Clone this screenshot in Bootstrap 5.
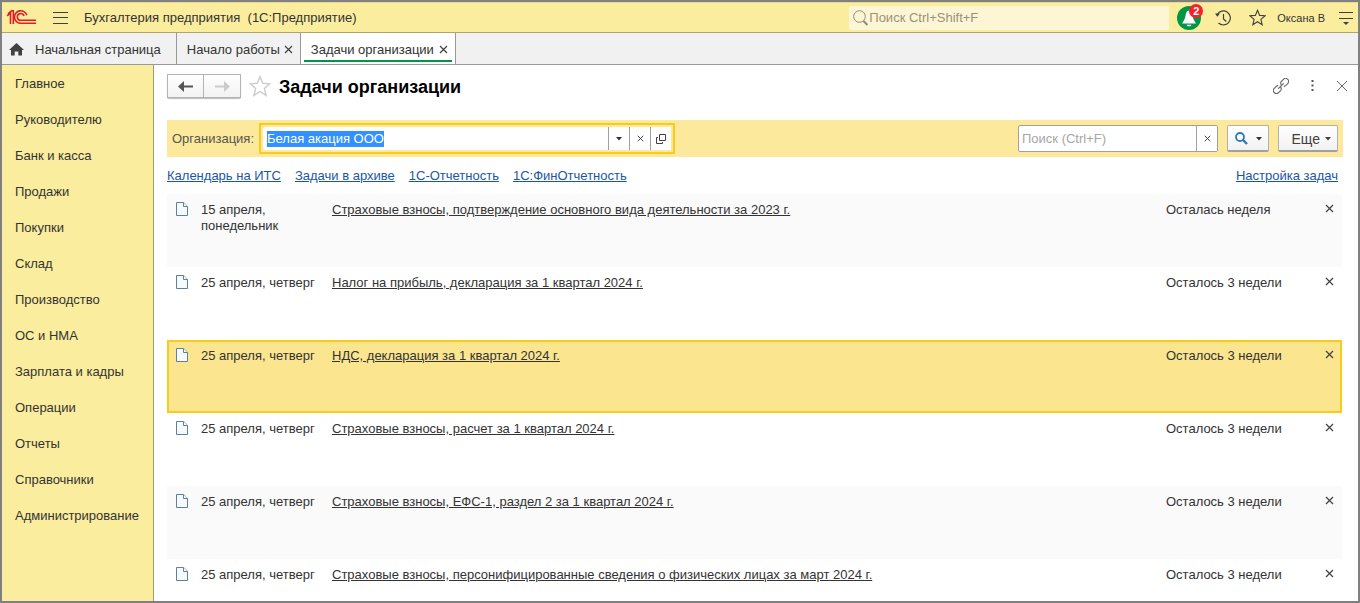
<!DOCTYPE html>
<html lang="ru">
<head>
<meta charset="utf-8">
<meta name="viewport" content="width=device-width, initial-scale=1">
<title>Задачи организации</title>
<link href="https://cdn.jsdelivr.net/npm/bootstrap@5.3.0/dist/css/bootstrap.min.css" rel="stylesheet">
<style>
  body { font-family: "Liberation Sans", Arial, sans-serif; font-size: 13px; line-height: 16px; color: #333; }
  button, input { font: inherit; color: inherit; }
  svg { display: block; flex: none; }
  .app { border: 2px solid #808080; }
  .bare { border: 0; background: none; padding: 0; color: #404040; }
  .topbar { height: 31px; background: #fbed9e; border-top: 1px solid #e9d98a; border-bottom: 1px solid #b0a468; }
  .product { padding-left: 16px; white-space: pre; }
  .top-tools { gap: 11px; padding: 0 5px 0 8px; }
  .history { padding: 0 3px; }
  .global-find { width: 320px; height: 24px; background: #fdf6d4; border-radius: 2px; color: #8f8a74; }
  .plain-input { border: 0; outline: 0; background: transparent; min-width: 0; padding: 0; }
  .plain-input::placeholder { color: #a6a6a6; opacity: 1; }
  .global-find .plain-input::placeholder { color: #98927a; }
  .user { padding-right: 3px; font-size: 11px; color: #333; text-decoration: none; }
  .count { left: 12px; top: -2px; width: 14px; height: 14px; border-radius: 50%; background: #f5222d; color: #fff; font-size: 11px; line-height: 14px; font-weight: bold; }
  .tabs { height: 32px; background: #f1f1f1; border-bottom: 1px solid #999; }
  .tab { border-right: 1px solid #999; padding: 2px 7px 0 10px; gap: 4px; }
  .tab a { color: #333; text-decoration: none; }
  .tab.home { padding: 2px 15px 0 7px; gap: 11px; }
  .tab.current { gap: 5px; background: #fff; box-shadow: inset 3px 0 #fff, inset -3px 0 #fff, inset 0 -2px #fff, inset 0 -4px #009646; }
  .side { width: 152px; padding-top: 1px; background: #fbed9e; border-right: 1px solid #a89c62; }
  .side a { color: #333; text-decoration: none; padding: 10px 0 10px 13px; }
  .main-area { padding: 9px 15px 0 13px; background: #fff; }
  .title-tools { gap: 22px; padding-right: 1px; margin-right: -6px; }
  .nav-pair { box-shadow: 0 1px 1px #bbb; border-radius: 2px; }
  .nav-pair button { width: 37px; height: 24px; border: 1px solid #b4b4b4; background: linear-gradient(#fff, #f2f2f2); padding: 0; color: #555; }
  .nav-pair button + button { border-left: 0; color: #ccc; }
  .fav { color: #ccc; }
  h1 { font-size: 18px; line-height: 22px; padding-top: 2px; font-weight: bold; color: #000; margin: 0; }
  .filterbar { height: 37px; margin-top: 22px; padding: 0 5px; background: #fce99c; }
  .filterbar > label { color: #555; }
  .org { width: 416px; height: 31px; margin-left: 5px; border: 2px solid #fbcb1c; padding: 2px; }
  .org .plain-input { background: #fff; padding-left: 4px; border-radius: 2px 0 0 2px; }
  .org button { width: 21px; border: 0; border-left: 1px solid #a0a0a0; background: #fff; padding: 0; }
  .org .plain-input::selection { background: #3390ff; color: #fff; }
  .right-tools { gap: 9px; }
  .find { width: 200px; height: 27px; border: 1px solid #a0a0a0; border-radius: 2px; background: #fff; }
  .find .plain-input { padding-left: 3px; }
  .find button { width: 21px; border: 0; border-left: 1px solid #a0a0a0; background: #fff; padding: 0; }
  .push { height: 27px; border: 1px solid #b0b0b0; border-bottom: 2px solid #a0a0a0; border-radius: 2px; background: linear-gradient(#fff, #f2f2f2); padding: 1px 6px 0; }
  .push.more { width: 60px; gap: 5px; font-size: 14px; color: #404040; }
  .push.lens { width: 42px; }
  .links { padding: 11px 5px 0 0; gap: 14px; }
  .links a { color: #1a56a8; }
  .tasks { table-layout: fixed; margin-top: 10px; width: calc(100% - 1px); border-collapse: collapse; }
  .tasks td { height: 73px; padding: 8px 0 0; vertical-align: top; }
  .tasks td:first-child { padding-left: 9px; }
  .tasks td:last-child { padding: 7px 0 0 13px; }
  .tasks tr:nth-child(odd) td { background: #fafafa; }
  .tasks tr.chosen { outline: 2px solid #fbcb1c; outline-offset: -2px; }
  .tasks tr.chosen td { background: #fbe58f; }
  .tasks a { color: #333; }
  .c-icon { width: 34px; } .c-date { width: 131px; } .c-left { width: 146px; } .c-del { width: 30px; }
</style>
</head>
<body>
<svg class="d-none" aria-hidden="true">
  <symbol id="x" viewBox="0 0 9 9"><path d="M1 1l7 7M8 1l-7 7" stroke="currentColor" stroke-width="1.2" fill="none"/></symbol>
  <symbol id="down" viewBox="0 0 6 4"><path d="M0 0h6L3 3.5z" fill="currentColor"/></symbol>
  <symbol id="star" viewBox="0 0 20 20"><path d="M10 1.5l2.500 6 6.300.5-4.800 4.200 1.500 6.300L10 15l-5.500 3.500L6 12.200 1.200 8l6.300-.5z" stroke="currentColor" stroke-width="1.3" fill="none"/></symbol>
  <symbol id="doc" viewBox="0 0 12 14"><path d="M.5.5h7.2l3.8 3.8v9.2H.5z" fill="#f7fafc" stroke="#5f8098"/><path d="M7.5.5v4h4" fill="#fff" stroke="#5f8098"/></symbol>
</svg>
<div class="app vh-100 d-flex flex-column overflow-hidden">
  <header class="topbar d-flex align-items-center flex-shrink-0">
    <svg class="ms-1" width="31" height="17" viewBox="0 0 31 17" fill="none" stroke="#dc1f26" stroke-width="1.6" role="img" aria-label="1С"><path d="M1.200 6.800L4.500 3.800V15M2 4.800L5.500 1.800H7.300V15"/><path d="M20.800 6.200A6.300 6.300 0 1 0 15.200 14.300H30"/><path d="M18 7A3.400 3.400 0 1 0 15.200 11.300H30"/></svg>
    <button class="bare ms-3" aria-label="Меню"><svg width="15" height="12" viewBox="0 0 15 12" stroke="#404040"><path d="M0 .5h15M0 5.500h15M0 11.500h15"/></svg></button>
    <span class="product flex-grow-1">Бухгалтерия предприятия  (1С:Предприятие)</span>
    <div class="global-find d-flex align-items-center px-1">
      <svg width="16" height="16" viewBox="0 0 16 16" fill="none" stroke="currentColor"><circle cx="6.500" cy="6.500" r="5.800"/><path d="M10.500 11l4 4" stroke-width="2"/></svg>
      <input class="plain-input flex-grow-1" type="search" aria-label="Поиск" placeholder="Поиск Ctrl+Shift+F">
    </div>
    <div class="top-tools d-flex align-items-center">
      <button class="bare position-relative" aria-label="Уведомления"><svg width="24" height="24" viewBox="0 0 24 24"><circle cx="12" cy="12" r="12" fill="#009646"/><path d="M12 4.500c-2.600 0-3 3-3.500 5.500-.5 3-2 5-3.500 7.500h14c-1.500-2.500-3-4.500-3.500-7.500-.5-2.500-.9-5.500-3.500-5.500zM9.500 18.700h5l-1.200 1.500h-2.600z" fill="#fff"/></svg><span class="count position-absolute text-center">2</span></button>
      <button class="bare history" aria-label="История"><svg width="16" height="16" viewBox="0 0 16 16" fill="none" stroke="#404040" stroke-width="1.200"><path d="M2.300 4.500A7 7 0 1 1 3.500 13M8.500 4v5l2.800 2.500"/><path d="M0 3.500h5L2.300 6.800z" fill="#404040" stroke="none"/></svg></button>
      <button class="bare ms-1" aria-label="Избранное"><svg width="17" height="17"><use href="#star"/></svg></button>
      <a class="user" href="#">Оксана В</a>
      <button class="bare" aria-label="Сервис"><svg width="14" height="14" viewBox="0 0 14 14"><path d="M0 1.500h14M0 7.500h14" stroke="#404040"/><path d="M4 11h6l-3 3z" fill="#404040"/></svg></button>
    </div>
  </header>
  <nav class="tabs d-flex flex-shrink-0">
    <div class="tab home d-flex align-items-center"><svg width="15" height="13" viewBox="0 0 15 13"><path d="M7.500 0L15 7h-2v5.500H9.300V8.500H5.700v4H2V7H0z" fill="#404040"/></svg><a href="#">Начальная страница</a></div>
    <div class="tab d-flex align-items-center"><a href="#">Начало работы</a><button class="bare" aria-label="Закрыть"><svg width="9" height="9"><use href="#x"/></svg></button></div>
    <div class="tab current d-flex align-items-center"><a href="#">Задачи организации</a><button class="bare" aria-label="Закрыть"><svg width="9" height="9"><use href="#x"/></svg></button></div>
  </nav>
  <div class="d-flex flex-grow-1 overflow-hidden">
    <nav class="side d-flex flex-column flex-shrink-0">
      <a href="#">Главное</a><a href="#">Руководителю</a><a href="#">Банк и касса</a><a href="#">Продажи</a><a href="#">Покупки</a><a href="#">Склад</a><a href="#">Производство</a><a href="#">ОС и НМА</a><a href="#">Зарплата и кадры</a><a href="#">Операции</a><a href="#">Отчеты</a><a href="#">Справочники</a><a href="#">Администрирование</a>
    </nav>
    <main class="main-area flex-grow-1">
      <div class="d-flex align-items-center">
        <div class="nav-pair d-flex">
          <button class="d-flex align-items-center justify-content-center" aria-label="Назад"><svg width="15" height="11" viewBox="0 0 15 11"><path d="M0 5.500L6 0v4.500h9v2H6V11z" fill="currentColor"/></svg></button>
          <button class="d-flex align-items-center justify-content-center" aria-label="Вперед"><svg width="15" height="11" viewBox="0 0 15 11"><path d="M15 5.500L9 0v4.500H0v2h9V11z" fill="currentColor"/></svg></button>
        </div>
        <button class="bare fav mx-2" aria-label="В избранное"><svg width="22" height="22"><use href="#star"/></svg></button>
        <h1 class="flex-grow-1">Задачи организации</h1>
        <div class="title-tools d-flex align-items-center">
          <button class="bare" aria-label="Ссылка"><svg width="16" height="16" viewBox="0 0 16 16" fill="none" stroke="#666" stroke-width="1.100" stroke-linecap="round"><g transform="rotate(-45 8 8)"><path d="M7 8.500A3 3 0 0 1 4.500 11H1.500a3 3 0 0 1 0-6h3A3 3 0 0 1 6 5.500M9 7.500A3 3 0 0 1 11.500 5h3a3 3 0 0 1 0 6h-3a3 3 0 0 1-1.500-.5M4.500 8h7"/></g></svg></button>
          <button class="bare" aria-label="Еще"><svg width="3" height="12" viewBox="0 0 3 12" fill="#555"><path d="M.5 0h2v2h-2zM.5 4.500h2v2h-2zM.5 9h2v2h-2z"/></svg></button>
          <button class="bare" aria-label="Закрыть"><svg width="12" height="12" viewBox="0 0 12 12" stroke="#666"><path d="M1 1l10 10M11 1L1 11"/></svg></button>
        </div>
      </div>
      <div class="filterbar d-flex align-items-center">
        <label for="org">Организация:</label>
        <div class="org d-flex me-auto">
          <input id="org" class="plain-input flex-grow-1" type="text" value="Белая акация ООО">
          <button class="d-flex align-items-center justify-content-center" aria-label="Выбрать"><svg width="6" height="4"><use href="#down"/></svg></button>
          <button class="d-flex align-items-center justify-content-center" aria-label="Очистить"><svg width="7" height="7"><use href="#x"/></svg></button>
          <button class="d-flex align-items-center justify-content-center" aria-label="Открыть"><svg width="10" height="10" viewBox="0 0 10 10" fill="none" stroke="#404040"><path d="M3.500.5h6v6h-6zM2 3.500H.5v6h6V8"/></svg></button>
        </div>
        <div class="right-tools d-flex">
          <div class="find d-flex">
            <input class="plain-input flex-grow-1" type="search" aria-label="Поиск по списку" placeholder="Поиск (Ctrl+F)">
            <button class="d-flex align-items-center justify-content-center" aria-label="Очистить поиск"><svg width="7" height="7"><use href="#x"/></svg></button>
          </div>
          <button class="push lens d-flex align-items-center justify-content-center gap-2" aria-label="Найти"><svg width="13" height="13" viewBox="0 0 13 13" fill="none" stroke="#2e78b5"><circle cx="5" cy="5" r="4" stroke-width="1.800"/><path d="M8 8l4 4" stroke-width="2.400"/></svg><svg width="6" height="4"><use href="#down"/></svg></button>
          <button class="push more d-flex align-items-center justify-content-end">Еще<svg width="6" height="4"><use href="#down"/></svg></button>
        </div>
      </div>
      <div class="links d-flex">
        <a href="#">Календарь на ИТС</a><a href="#">Задачи в архиве</a><a href="#">1С-Отчетность</a><a href="#">1С:ФинОтчетность</a><a class="ms-auto" href="#">Настройка задач</a>
      </div>
      <table class="tasks">
        <colgroup><col class="c-icon"><col class="c-date"><col><col class="c-left"><col class="c-del"></colgroup>
        <tbody id="rows"></tbody>
      </table>
    </main>
  </div>
</div>
<script src="https://cdn.jsdelivr.net/npm/bootstrap@5.3.0/dist/js/bootstrap.bundle.min.js"></script>
<script>
  const tasks = [
    ['15 апреля,<br>понедельник', 'Страховые взносы, подтверждение основного вида деятельности за 2023 г.', 'Осталась неделя'],
    ['25 апреля, четверг', 'Налог на прибыль, декларация за 1 квартал 2024 г.', 'Осталось 3 недели'],
    ['25 апреля, четверг', 'НДС, декларация за 1 квартал 2024 г.', 'Осталось 3 недели'],
    ['25 апреля, четверг', 'Страховые взносы, расчет за 1 квартал 2024 г.', 'Осталось 3 недели'],
    ['25 апреля, четверг', 'Страховые взносы, ЕФС-1, раздел 2 за 1 квартал 2024 г.', 'Осталось 3 недели'],
    ['25 апреля, четверг', 'Страховые взносы, персонифицированные сведения о физических лицах за март 2024 г.', 'Осталось 3 недели']
  ];
  document.getElementById('rows').innerHTML = tasks.map(([date, name, left], i) => `
    <tr class="${i === 2 ? 'chosen' : ''}">
      <td><svg width="12" height="14"><use href="#doc"/></svg></td>
      <td>${date}</td><td><a href="#">${name}</a></td><td>${left}</td>
      <td><button class="bare d-block" style="margin-top:3px" aria-label="Скрыть задачу"><svg width="9" height="9"><use href="#x"/></svg></button></td>
    </tr>`).join('');
  const org = document.getElementById('org');
  org.focus();
  org.select();
</script>
</body>
</html>
